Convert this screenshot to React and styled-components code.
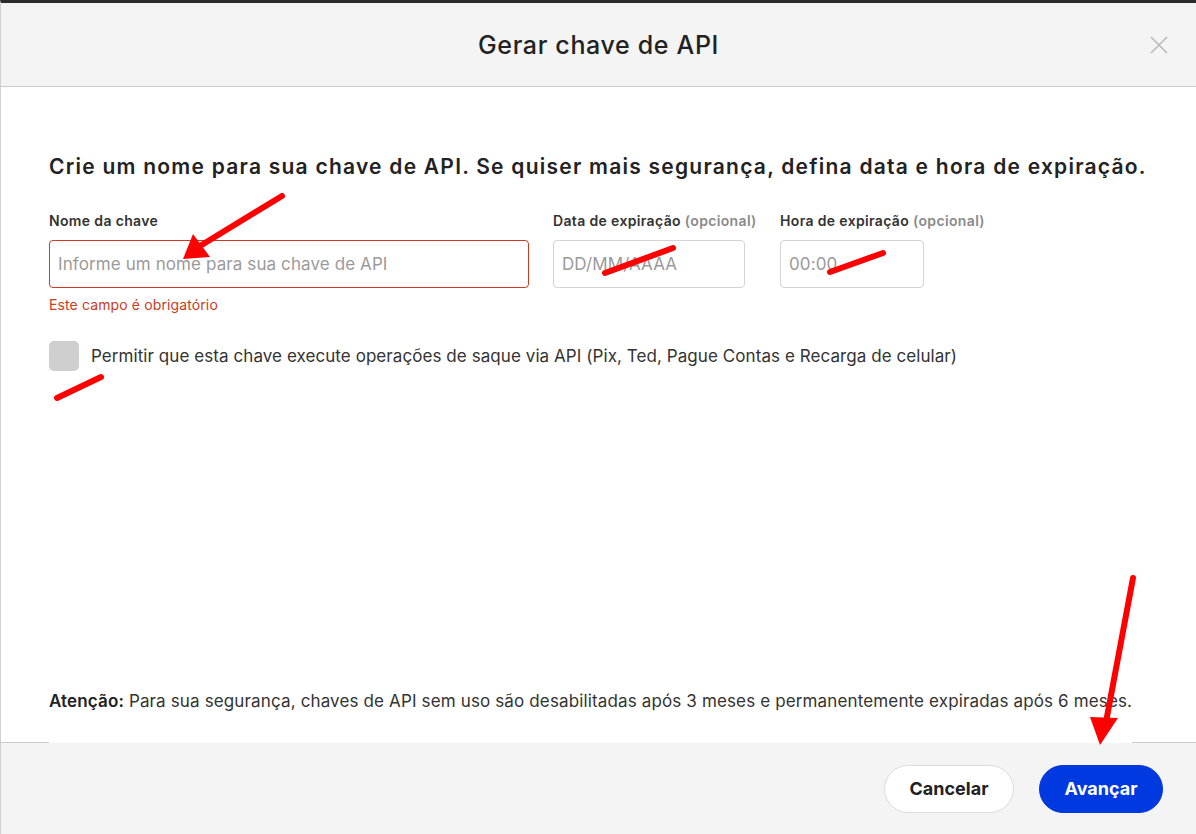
import styled, { createGlobalStyle } from "styled-components";

const GlobalStyle = createGlobalStyle`
  * { box-sizing: border-box; }
  body {
    margin: 0;
    background: #ffffff;
    font-family: Inter, "Noto Sans", sans-serif;
    color: #222;
  }
`;

const Page = styled.div`
  position: relative;
  height: 834px;
  display: flex;
  flex-direction: column;
  border-top: 3px solid #2b2b2b;
  border-left: 1px solid #cfcfcf;
  overflow: hidden;
`;

const Header = styled.header`
  height: 84px;
  flex-shrink: 0;
  display: grid;
  grid-template-columns: 1fr auto 1fr;
  align-items: center;
  background: #f4f4f4;
  border-bottom: 1px solid #cccccc;
`;

const Title = styled.h1`
  grid-column: 2;
  margin: 0;
  font-size: 25px;
  font-weight: 500;
  color: #222;
  letter-spacing: 0.65px;
`;

const CloseButton = styled.button`
  justify-self: end;
  margin-right: 26px;
  width: 22px;
  height: 22px;
  padding: 0;
  border: none;
  background: none;
  display: flex;
  align-items: center;
  justify-content: center;
  cursor: pointer;
`;

const Body = styled.main`
  flex: 1;
  display: flex;
  flex-direction: column;
  padding: 66px 48px 0 48px;
`;

const Heading = styled.h2`
  margin: 0;
  font-size: 21px;
  line-height: 28px;
  font-weight: 600;
  color: #222;
  letter-spacing: 1.24px;
  white-space: nowrap;
`;

const FieldsRow = styled.div`
  display: flex;
  gap: 24px;
  margin-top: 31px;
`;

const Field = styled.div`
  width: ${(p) => p.$width}px;
  display: flex;
  flex-direction: column;
`;

const Label = styled.label`
  font-size: 14px;
  line-height: 18px;
  font-weight: 600;
  color: #333;
  letter-spacing: 0.35px;
  white-space: nowrap;
`;

const Optional = styled.span`
  color: #8a8a8a;
`;

const Input = styled.input`
  width: ${(p) => p.$width || "100%"};
  height: 48px;
  margin-top: 10px;
  padding: 0 8px;
  border: 1px solid ${(p) => (p.$error ? "#cc3a22" : "#d4d4d4")};
  border-radius: 4px;
  font-family: Inter, "Noto Sans", sans-serif;
  font-size: 17px;
  letter-spacing: 0.1px;
  color: #222;
  background: #fff;
  outline: none;

  &::placeholder {
    color: #9a9a9a;
  }
`;

const ErrorText = styled.span`
  margin-top: 8px;
  font-size: 14px;
  line-height: 18px;
  letter-spacing: 0.12px;
  color: #cc3a22;
`;

const CheckRow = styled.label`
  display: flex;
  align-items: center;
  gap: 12px;
  margin-top: 27px;
  cursor: pointer;
`;

const CheckBox = styled.span`
  width: 30px;
  height: 30px;
  border-radius: 5px;
  background: #cfcfcf;
  flex-shrink: 0;
`;

const CheckText = styled.span`
  font-size: 17px;
  letter-spacing: 0.07px;
  color: #333;
  white-space: nowrap;
`;

const Notice = styled.p`
  position: relative;
  z-index: 1;
  margin: auto 0 -1px 0;
  padding-bottom: 30px;
  width: fit-content;
  background: #fff;
  font-size: 17px;
  line-height: 24px;
  letter-spacing: 0.14px;
  color: #333;
  white-space: nowrap;
`;

const Strong = styled.strong`
  font-weight: 600;
  color: #222;
`;

const Footer = styled.footer`
  height: 92px;
  flex-shrink: 0;
  display: flex;
  justify-content: flex-end;
  align-items: center;
  gap: 25px;
  padding-right: 33px;
  background: #f4f4f4;
  border-top: 1px solid #cccccc;
`;

const Button = styled.button`
  height: 48px;
  width: ${(p) => p.$width}px;
  border-radius: 24px;
  font-family: Inter, "Noto Sans", sans-serif;
  font-size: 18px;
  font-weight: 700;
  cursor: pointer;
  border: 1px solid ${(p) => (p.$primary ? "#0039e0" : "#dcdcdc")};
  background: ${(p) => (p.$primary ? "#0039e0" : "#ffffff")};
  color: ${(p) => (p.$primary ? "#ffffff" : "#222")};
`;

const Annotations = styled.svg`
  position: absolute;
  left: -1px;
  top: -3px;
  width: 1196px;
  height: 834px;
  pointer-events: none;
  z-index: 5;
`;

export default function App() {
  return (
    <>
      <GlobalStyle />
      <Page>
        <Header>
          <Title>Gerar chave de API</Title>
          <CloseButton aria-label="Fechar">
            <svg width="18" height="18" viewBox="0 0 18 18">
              <path d="M1 1 L17 17 M17 1 L1 17" stroke="#b9b9b9" strokeWidth="1.6" />
            </svg>
          </CloseButton>
        </Header>

        <Body>
          <Heading>
            Crie um nome para sua chave de API. Se quiser mais segurança, defina data e hora de expiração.
          </Heading>

          <FieldsRow>
            <Field $width={480}>
              <Label>Nome da chave</Label>
              <Input $error placeholder="Informe um nome para sua chave de API" />
              <ErrorText>Este campo é obrigatório</ErrorText>
            </Field>
            <Field $width={203}>
              <Label>
                Data de expiração <Optional>(opcional)</Optional>
              </Label>
              <Input $width="192px" placeholder="DD/MM/AAAA" />
            </Field>
            <Field $width={210}>
              <Label>
                Hora de expiração <Optional>(opcional)</Optional>
              </Label>
              <Input $width="144px" placeholder="00:00" />
            </Field>
          </FieldsRow>

          <CheckRow>
            <CheckBox />
            <CheckText>
              Permitir que esta chave execute operações de saque via API (Pix, Ted, Pague Contas e Recarga de celular)
            </CheckText>
          </CheckRow>

          <Notice>
            <Strong>Atenção:</Strong> Para sua segurança, chaves de API sem uso são desabilitadas após 3 meses e
            permanentemente expiradas após 6 meses.
          </Notice>
        </Body>

        <Footer>
          <Button $width={130}>Cancelar</Button>
          <Button $primary $width={124}>Avançar</Button>
        </Footer>

        <Annotations viewBox="0 0 1196 834">
          <g stroke="#ff0000" strokeWidth="6" strokeLinecap="round" fill="none">
            <line x1="282" y1="196" x2="200" y2="246" />
            <line x1="605" y1="273" x2="673" y2="248" />
            <line x1="830" y1="272" x2="883" y2="253" />
            <line x1="57" y1="398" x2="101" y2="377" />
            <line x1="1133" y1="578" x2="1106" y2="722" />
          </g>
          <g fill="#ff0000">
            <polygon points="183,259 193,234 210,257" />
            <polygon points="1090,717 1118,718 1100,745" />
          </g>
        </Annotations>
      </Page>
    </>
  );
}
